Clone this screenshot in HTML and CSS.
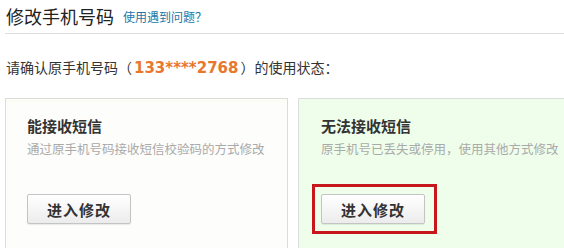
FILE: index.html
```html
<!DOCTYPE html>
<html lang="zh-CN">
<head>
<meta charset="utf-8">
<title>修改手机号码</title>
<link rel="stylesheet" href="styles.css">
</head>
<body>
<div class="page">
  <div class="head">
    <h1 class="head-title">修改手机号码</h1>
    <a class="head-link" href="#">使用遇到问题？</a>
  </div>
  <p class="intro">请确认原手机号码（<b class="phone">133****2768</b>）的使用状态：</p>
  <div class="cards">
    <div class="card card-can">
      <h2 class="card-title">能接收短信</h2>
      <p class="card-desc">通过原手机号码接收短信校验码的方式修改</p>
      <div class="btn-wrap">
        <button class="btn">进入修改</button>
      </div>
    </div>
    <div class="card card-cannot">
      <h2 class="card-title">无法接收短信</h2>
      <p class="card-desc">原手机号已丢失或停用，使用其他方式修改</p>
      <div class="btn-wrap">
        <button class="btn">进入修改</button>
        <span class="highlight"></span>
      </div>
    </div>
  </div>
</div>
</body>
</html>
```
FILE: styles.css
```css
html, body {
  margin: 0;
  padding: 0;
  background: #fff;
  overflow: hidden;
}
body {
  font-family: "Noto Sans CJK SC", "Liberation Sans", sans-serif;
  color: #333;
}
.page {
  padding-left: 5px;
}
.head {
  display: flex;
  align-items: flex-end;
  gap: 9px;
  padding: 6px 0 7px 1px;
  border-bottom: 1px solid #dedede;
}
.head-title {
  margin: 0;
  font-size: 18px;
  line-height: 20px;
  font-weight: normal;
  color: #222;
}
.head-link {
  font-size: 12px;
  line-height: 18px;
  color: #2277a8;
  text-decoration: none;
}
.intro {
  margin: 23px 0 0 1px;
  font-size: 14px;
  line-height: 20px;
  color: #333;
}
.phone {
  font-family: "DejaVu Sans", "Liberation Sans", sans-serif;
  font-size: 15px;
  font-weight: bold;
  color: #e8772e;
  padding: 0 2px;
}
.cards {
  display: flex;
  gap: 10px;
  margin-top: 20px;
}
.card {
  flex: 0 0 283px;
  box-sizing: border-box;
  height: 151px;
  padding: 17px 0 0 21px;
  border: 1px solid #dcdcdc;
  border-bottom: 0;
}
.card-can {
  background: linear-gradient(#fdfdf3, #fdfdfb 6px);
}
.card-cannot {
  background: #effeeb;
  padding-left: 22px;
}
.card-title {
  margin: 0;
  font-size: 15px;
  line-height: 20px;
  font-weight: bold;
  color: #333;
}
.card-desc {
  margin: 4px 0 0;
  font-size: 12.5px;
  line-height: 18px;
  color: #aaa;
  white-space: nowrap;
}
.btn-wrap {
  position: relative;
  display: inline-block;
  margin-top: 36px;
}
.btn {
  display: block;
  width: 104px;
  height: 30px;
  padding: 0;
  border: 1px solid #c4c4c4;
  border-radius: 2px;
  background: linear-gradient(#ffffff, #ececec);
  box-shadow: 0 1px 1px rgba(0, 0, 0, 0.08);
  font-family: "Noto Sans CJK SC", sans-serif;
  font-size: 15px;
  font-weight: bold;
  color: #333;
  letter-spacing: 1px;
}
.highlight {
  position: absolute;
  left: -9px;
  top: -10px;
  width: 125px;
  height: 50px;
  box-sizing: border-box;
  border: 3px solid #c8161d;
}
```
